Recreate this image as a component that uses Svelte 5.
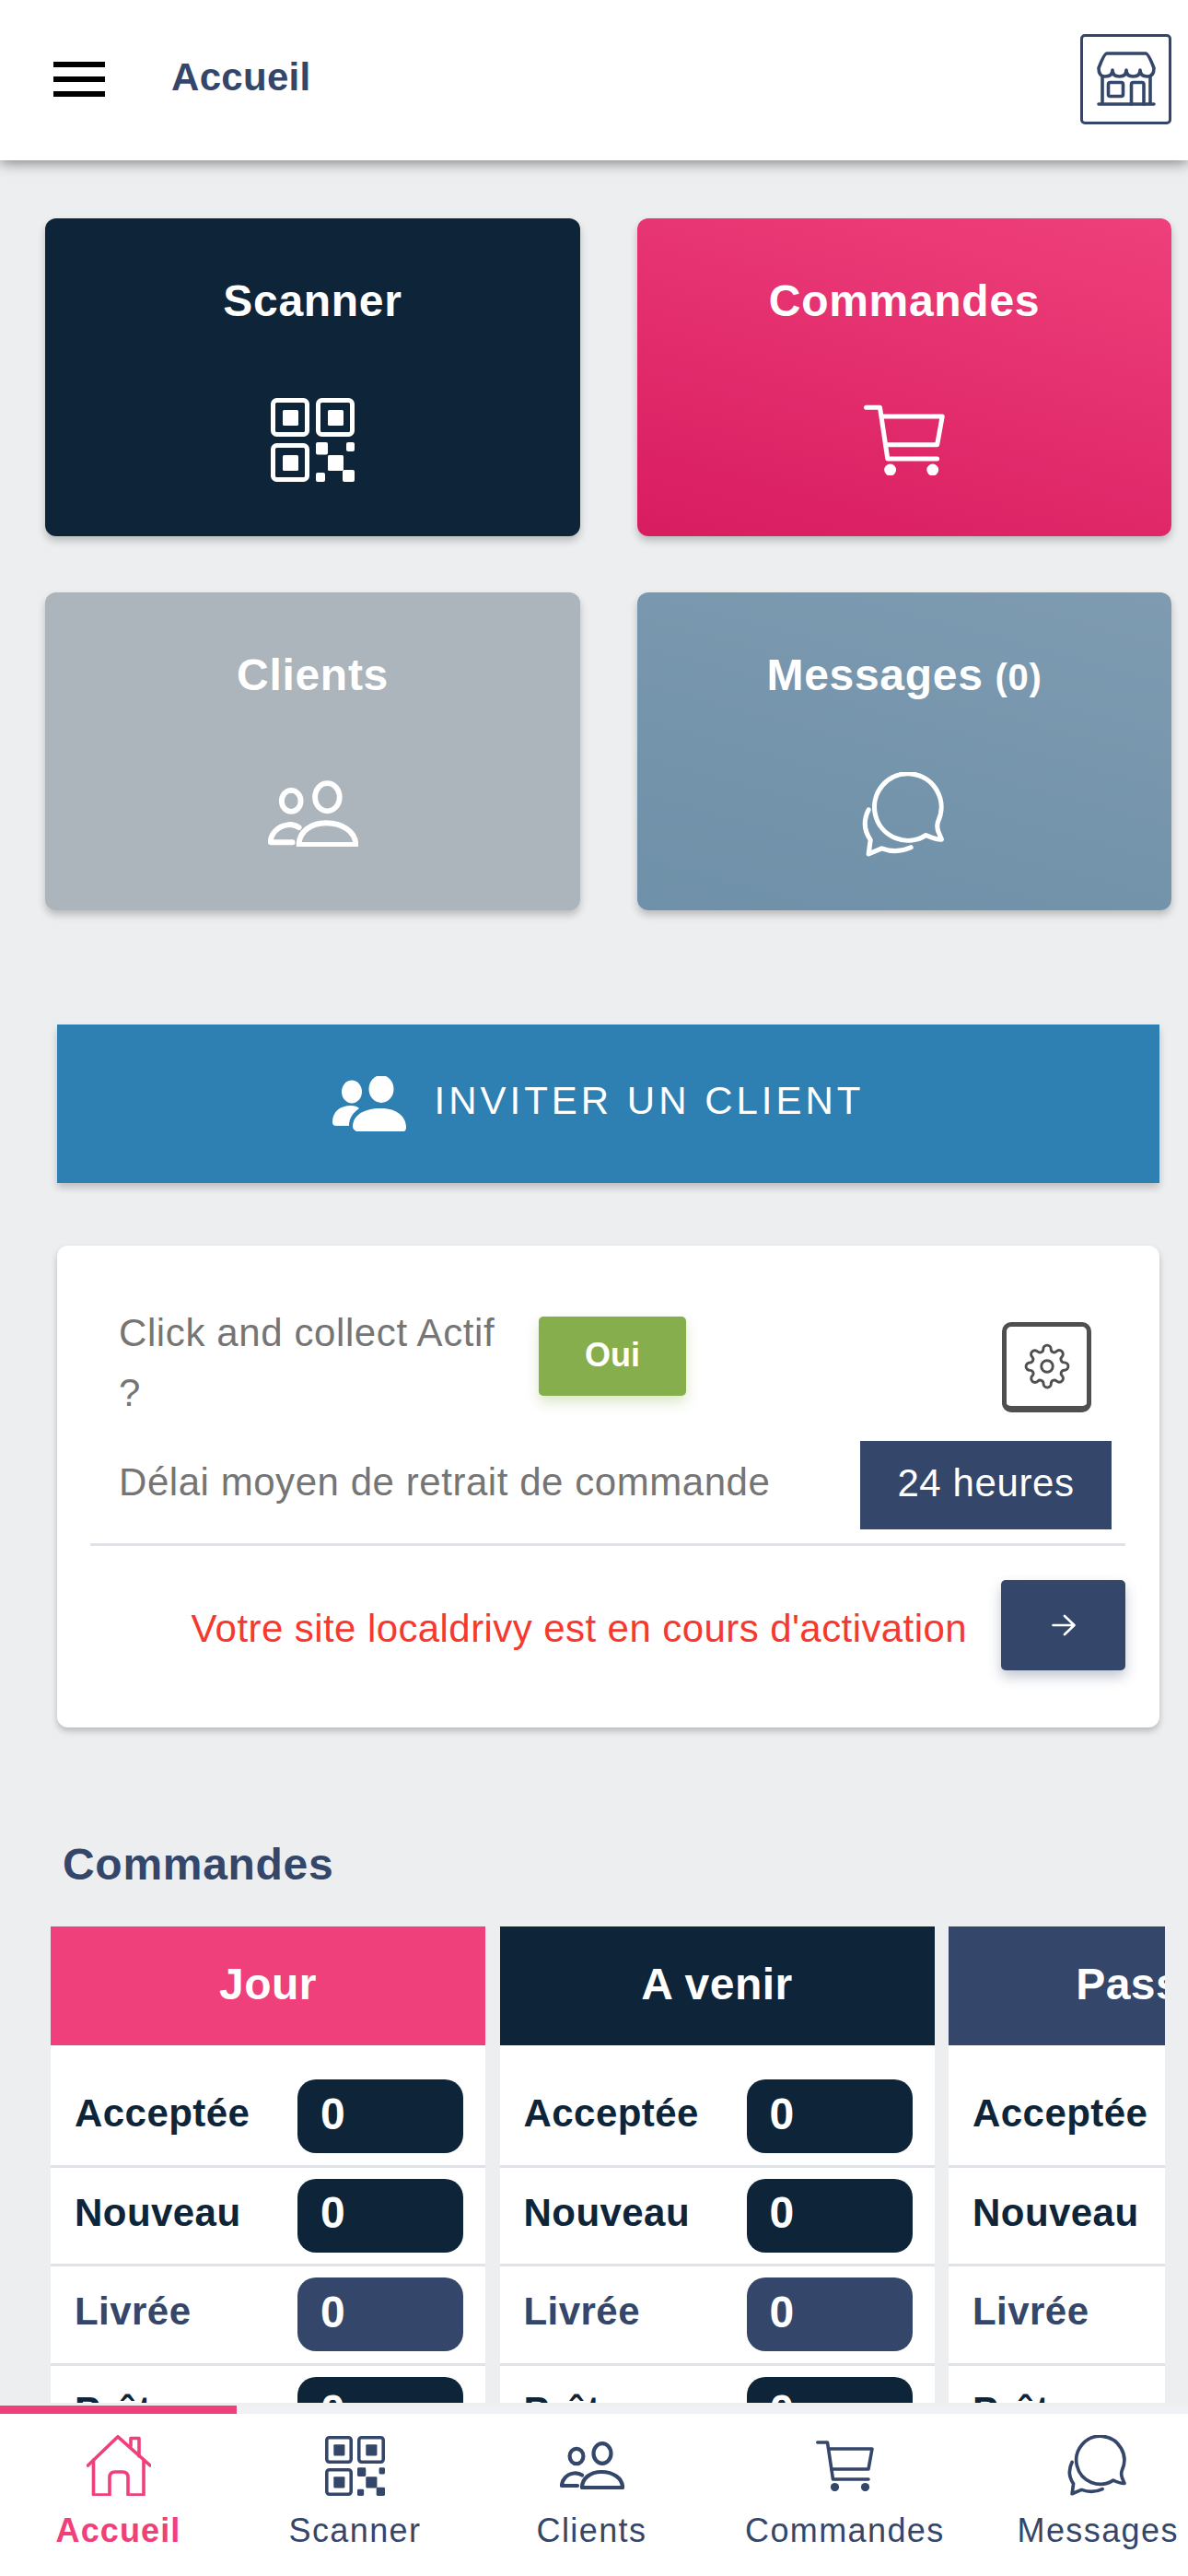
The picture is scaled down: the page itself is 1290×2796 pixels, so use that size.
<script>
  const VIEW = {
    qr: [91, 91, 5],
    cart: [63, 56, 3.6],
    users: [70, 52, 4.2],
    chat: [90, 91, 5],
    home: [70, 66, 3.6],
    store: [64, 60, 3.6],
    peopleFill: [80, 60, 0],
  };

  const CARDS = [
    { title: "Scanner", icon: "qr", w: 91, tone: "navy" },
    { title: "Commandes", icon: "cart", w: 88, tone: "pink" },
    { title: "Clients", icon: "users", w: 98, tone: "grey" },
    { title: "Messages", count: "(0)", icon: "chat", w: 92, tone: "slate" },
  ];

  const COLUMNS = [
    { title: "Jour", tone: "pinkhead" },
    { title: "A venir", tone: "navyhead" },
    { title: "Passées", tone: "bluehead" },
  ];

  const ROWS = [
    { label: "Acceptée", n: 0 },
    { label: "Nouveau", n: 0 },
    { label: "Livrée", n: 0, soft: true },
    { label: "Prête", n: 0 },
  ];

  const TABS = [
    { label: "Accueil", icon: "home", w: 70, active: true },
    { label: "Scanner", icon: "qr", w: 65 },
    { label: "Clients", icon: "users", w: 70 },
    { label: "Commandes", icon: "cart", w: 63 },
    { label: "Messages", icon: "chat", w: 66 },
  ];
</script>

{#snippet icon(name, w)}
  <svg
    width={w}
    height={(w * VIEW[name][1]) / VIEW[name][0]}
    viewBox="0 0 {VIEW[name][0]} {VIEW[name][1]}"
    fill="none"
    stroke="currentColor"
    stroke-width={VIEW[name][2]}
    stroke-linecap="round"
    stroke-linejoin="round"
  >
    {#if name === "qr"}
      <rect x="2.5" y="2.5" width="37" height="37" rx="4" />
      <rect x="51.5" y="2.5" width="37" height="37" rx="4" />
      <rect x="2.5" y="51.5" width="37" height="37" rx="4" />
      <g fill="currentColor" stroke="none">
        <rect x="13" y="13" width="17" height="17" rx="1.5" />
        <rect x="62" y="13" width="17" height="17" rx="1.5" />
        <rect x="13" y="62" width="17" height="17" rx="1.5" />
        <rect x="49" y="48" width="13" height="13.5" rx="2" />
        <rect x="82" y="48" width="9" height="10" rx="2" />
        <rect x="62" y="62" width="17" height="17" rx="1.5" />
        <rect x="49" y="81" width="10" height="10" rx="2" />
        <rect x="78" y="78" width="13" height="13" rx="2" />
      </g>
    {:else if name === "cart"}
      <path d="M1.8 3H12.5L18.5 43H57" />
      <path d="M14 10H61L57 32H17" />
      <g fill="currentColor" stroke="none">
        <ellipse cx="20.5" cy="51.5" rx="4.6" ry="4.6" />
        <ellipse cx="53.5" cy="51.5" rx="4.6" ry="4.6" />
      </g>
    {:else if name === "users"}
      <ellipse cx="18" cy="16" rx="7.4" ry="8.2" />
      <ellipse cx="46" cy="13" rx="9.5" ry="10.8" />
      <path d="M24 36.5C21 34.5 18 34 15 34.500C7 35.500 2 42 2 48H19" />
      <path d="M24 50C24 40 33 33 45 33C58 33 68 40 68 50Z" />
    {:else if name === "chat"}
      <path d="M68 67A35.5 35.500 0 1 1 81 52Q79 57 81 63L84.500 71.500Q79 72 68 67Z" />
      <path d="M7 40C1 52 2 62 9 72L7 87L21 81Q37 87 52 80" />
    {:else if name === "home"}
      <path d="M1.500 33L34 1.800L69 33" />
      <path d="M7.500 27V65H25V46Q25 40 31 40H39Q45 40 45 46V65H62V27" />
      <path d="M48 12V3.500H57V23" />
    {:else if name === "store"}
      <path d="M11 2H53Q56 2 62 18Q62 27 55 27Q47 27 47 20Q47 27 39.500 27Q32 27 32 20Q32 27 24.500 27Q17 27 17 20Q17 27 9 27Q2 27 2 18Q8 2 11 2Z" />
      <path d="M6 27V57M58 27V57M2 57H62" />
      <rect x="12.500" y="33.500" width="16" height="15" rx="2" />
      <path d="M37.500 57V35.500Q37.500 33.500 39.500 33.500H49Q51 33.500 51 35.500V57" />
    {:else if name === "peopleFill"}
      <g fill="currentColor" stroke="none">
        <ellipse cx="21" cy="17" rx="11" ry="12.500" />
        <ellipse cx="53" cy="14" rx="13.500" ry="15" />
        <path d="M0 50C0 38 9 32 20 32C24 32 27 33 29 35C22 40 18 46 18 54H4C2 54 0 53 0 50Z" />
        <path d="M26 60C24 59 22 57 22 55C22 43 33 35 53 35C70 35 80 44 80 56C80 58 79 60 77 60Z" />
      </g>
    {/if}
  </svg>
{/snippet}

<div class="app">
  <header class="topbar">
    <button class="burger" aria-label="Menu"><span></span><span></span><span></span></button>
    <h1>Accueil</h1>
    <button class="shop" aria-label="Boutique">{@render icon("store", 64)}</button>
  </header>

  <main class="content">
    <section class="cards">
      {#each CARDS as c}
        <div class="card {c.tone}">
          <div class="card-title">{c.title}{#if c.count}<small>{c.count}</small>{/if}</div>
          <div class="card-icon">{@render icon(c.icon, c.w)}</div>
        </div>
      {/each}
    </section>

    <button class="invite">
      {@render icon("peopleFill", 80)}
      <span>INVITER UN CLIENT</span>
    </button>

    <section class="panel">
      <div class="p-row first">
        <div class="p-label">Click and collect Actif ?</div>
        <button class="oui">Oui</button>
        <button class="gear" aria-label="Réglages">
          <svg width="50" height="50" viewBox="0 0 24 24" fill="none" stroke="currentColor" stroke-width="1.4" stroke-linecap="round" stroke-linejoin="round">
            <circle cx="12" cy="12" r="3" />
            <path d="M19.4 15a1.65 1.65 0 0 0 .33 1.82l.06.06a2 2 0 0 1 0 2.83 2 2 0 0 1-2.83 0l-.06-.06a1.65 1.65 0 0 0-1.82-.33 1.65 1.65 0 0 0-1 1.51V21a2 2 0 0 1-2 2 2 2 0 0 1-2-2v-.09A1.65 1.65 0 0 0 9 19.4a1.65 1.65 0 0 0-1.82.33l-.06.06a2 2 0 0 1-2.83 0 2 2 0 0 1 0-2.83l.06-.06a1.65 1.65 0 0 0 .33-1.82 1.65 1.65 0 0 0-1.51-1H3a2 2 0 0 1-2-2 2 2 0 0 1 2-2h.09A1.65 1.65 0 0 0 4.6 9a1.65 1.65 0 0 0-.33-1.82l-.06-.06a2 2 0 0 1 0-2.83 2 2 0 0 1 2.83 0l.06.06a1.65 1.65 0 0 0 1.82.33H9a1.65 1.65 0 0 0 1-1.51V3a2 2 0 0 1 2-2 2 2 0 0 1 2 2v.09a1.65 1.65 0 0 0 1 1.51 1.65 1.65 0 0 0 1.82-.33l.06-.06a2 2 0 0 1 2.83 0 2 2 0 0 1 0 2.83l-.06.06a1.65 1.65 0 0 0-.33 1.82V9a1.65 1.65 0 0 0 1.51 1H21a2 2 0 0 1 2 2 2 2 0 0 1-2 2h-.09a1.65 1.65 0 0 0-1.51 1z" />
          </svg>
        </button>
      </div>
      <div class="p-row second">
        <div class="p-text">Délai moyen de retrait de commande</div>
        <button class="delay">24 heures</button>
      </div>
      <div class="divider"></div>
      <div class="p-row third">
        <div class="warn">Votre site localdrivy est en cours d'activation</div>
        <button class="go" aria-label="Ouvrir">
          <svg width="26" height="24" viewBox="0 0 26 24" fill="none" stroke="currentColor" stroke-width="2.600" stroke-linecap="round" stroke-linejoin="round">
            <path d="M1.500 12H24M14 2L24.500 12L14 22" />
          </svg>
        </button>
      </div>
    </section>

    <h2>Commandes</h2>

    <section class="strip">
      {#each COLUMNS as col}
        <div class="col">
          <div class="col-head {col.tone}">{col.title}</div>
          {#each ROWS as r}
            <div class="row" class:soft={r.soft}>
              <span class="row-label">{r.label}</span>
              <span class="pill">{r.n}</span>
            </div>
          {/each}
        </div>
      {/each}
    </section>
  </main>

  <nav class="tabbar">
    {#each TABS as t}
      <div class="tab" class:active={t.active}>
        <div class="tab-bar"></div>
        <div class="tab-icon">{@render icon(t.icon, t.w)}</div>
        <div class="tab-label">{t.label}</div>
      </div>
    {/each}
  </nav>
</div>

<style>
  :global(body) {
    margin: 0;
    background: #edeef0;
  }
  .app {
    width: 1290px;
    height: 2796px;
    display: flex;
    flex-direction: column;
    overflow: hidden;
    background: #edeef0;
    font-family: "Liberation Sans", Arial, sans-serif;
    color: #34466a;
  }
  button {
    font-family: inherit;
    border: none;
    padding: 0;
    background: none;
    color: inherit;
  }
  svg {
    display: block;
  }

  /* header */
  .topbar {
    flex: none;
    height: 174px;
    box-sizing: border-box;
    display: flex;
    align-items: center;
    padding: 0 18px 0 58px;
    background: #fff;
    box-shadow: 0 3px 14px rgba(0, 0, 0, 0.45);
    position: relative;
    z-index: 2;
  }
  .burger {
    width: 56px;
    display: flex;
    flex-direction: column;
    gap: 10px;
    margin-bottom: 2px;
  }
  .burger span {
    height: 6px;
    background: #000;
  }
  h1 {
    margin: 0 0 7px 72px;
    font-size: 42px;
    font-weight: 700;
    line-height: 50px;
    letter-spacing: 0.3px;
  }
  .shop {
    margin: 0 0 3px auto;
    width: 99px;
    height: 98px;
    box-sizing: border-box;
    border: 3px solid #34466a;
    border-radius: 5px;
    display: flex;
    align-items: center;
    justify-content: center;
  }

  /* quick cards */
  .content {
    flex: 1;
    min-height: 0;
    overflow: hidden;
  }
  .cards {
    display: grid;
    grid-template-columns: 581px 580px;
    grid-auto-rows: 345px;
    column-gap: 62px;
    row-gap: 61px;
    padding: 63px 18px 0 49px;
  }
  .card {
    border-radius: 12px;
    box-shadow: 0 5px 8px rgba(0, 0, 0, 0.22);
    color: #fff;
    text-align: center;
    padding-top: 62px;
    box-sizing: border-box;
  }
  .card-title {
    font-size: 48px;
    font-weight: 700;
    line-height: 56px;
    letter-spacing: 0.7px;
  }
  .card-title small {
    font-size: 40px;
    margin-left: 13px;
  }
  .card-icon {
    height: 96px;
    margin-top: 74px;
    display: flex;
    align-items: center;
    justify-content: center;
  }
  .navy {
    background: #0e2439;
  }
  .pink {
    background: linear-gradient(195deg, #ef407b, #d81c60);
  }
  .grey {
    background: #acb4bc;
  }
  .slate {
    background: linear-gradient(195deg, #7e9bb1, #6e90a8);
  }

  /* invite */
  .invite {
    display: flex;
    align-items: center;
    justify-content: center;
    gap: 30px;
    width: 1197px;
    height: 172px;
    margin: 124px 0 0 62px;
    padding-right: 21px;
    box-sizing: border-box;
    background: #2e7fb2;
    color: #fff;
    font-size: 42px;
    letter-spacing: 4px;
    box-shadow: 0 5px 8px rgba(0, 0, 0, 0.2);
  }
  .invite span {
    margin-bottom: 6px;
  }

  /* click and collect */
  .panel {
    width: 1197px;
    box-sizing: border-box;
    margin: 68px 0 0 62px;
    padding: 62px 0;
    background: #fff;
    border-radius: 12px;
    box-shadow: 0 4px 7px rgba(0, 0, 0, 0.22);
  }
  .p-row {
    display: flex;
    align-items: flex-start;
  }
  .first {
    padding-left: 67px;
    height: 130px;
  }
  .p-label {
    width: 426px;
    font-size: 42px;
    line-height: 65px;
    letter-spacing: 0.6px;
    color: #757575;
  }
  .oui {
    margin: 15px 0 0 30px;
    width: 160px;
    height: 86px;
    padding-bottom: 3px;
    border-radius: 5px;
    background: #87ae4c;
    color: #fff;
    font-size: 36px;
    font-weight: 700;
    box-shadow: 0 7px 14px rgba(135, 174, 76, 0.3);
  }
  .gear {
    margin: 21px 74px 0 auto;
    width: 97px;
    height: 98px;
    box-sizing: border-box;
    border: 5px solid #4f4f4f;
    border-bottom-width: 7px;
    border-radius: 10px;
    color: #4f4f4f;
    display: flex;
    align-items: center;
    justify-content: center;
  }
  .second {
    margin-top: 20px;
    padding: 0 52px 0 67px;
    align-items: center;
    justify-content: space-between;
  }
  .p-text {
    font-size: 42px;
    line-height: 50px;
    letter-spacing: 0.55px;
    color: #757575;
    margin-bottom: 7px;
  }
  .delay {
    width: 273px;
    height: 96px;
    padding-bottom: 5px;
    background: #34466a;
    color: #fff;
    font-size: 42px;
    letter-spacing: 0.6px;
  }
  .divider {
    height: 3px;
    margin: 15px 37px 0 36px;
    background: #dfe3e9;
  }
  .third {
    margin-top: 37px;
    padding-right: 37px;
    justify-content: flex-end;
    align-items: center;
    gap: 37px;
  }
  .warn {
    font-size: 42px;
    line-height: 50px;
    letter-spacing: 0.42px;
    color: #f6392f;
    margin-top: 8px;
  }
  .go {
    width: 135px;
    height: 98px;
    background: #34466a;
    border-radius: 5px;
    color: #fff;
    display: flex;
    align-items: center;
    justify-content: center;
    box-shadow: 0 7px 14px rgba(52, 70, 106, 0.3);
  }

  /* orders table */
  h2 {
    margin: 121px 0 39px 68px;
    font-size: 48px;
    font-weight: 700;
    line-height: 56px;
    letter-spacing: 0.7px;
  }
  .strip {
    display: flex;
    gap: 15.500px;
    margin: 0 25px 0 55px;
    overflow: hidden;
  }
  .col {
    flex: 0 0 472px;
    background: #fff;
  }
  .col-head {
    height: 129px;
    line-height: 125px;
    text-align: center;
    font-size: 48px;
    font-weight: 700;
    letter-spacing: 0.5px;
    color: #fff;
  }
  .pinkhead {
    background: #ef407b;
  }
  .navyhead {
    background: #0e2439;
  }
  .bluehead {
    background: #34466a;
  }
  .row {
    display: flex;
    align-items: center;
    justify-content: space-between;
    padding: 12px 24px 12.500px 26px;
    border-bottom: 3px solid #dfe3e9;
    color: #0e2439;
  }
  .row:nth-child(2) {
    padding-top: 37px;
  }
  .row-label {
    font-size: 42px;
    font-weight: 700;
    letter-spacing: 0.45px;
    padding-bottom: 6px;
  }
  .pill {
    width: 180px;
    height: 80px;
    box-sizing: border-box;
    padding: 0 0 6px 25px;
    border-radius: 20px;
    background: #0e2439;
    color: #fff;
    font-size: 48px;
    font-weight: 700;
    display: flex;
    align-items: center;
  }
  .soft {
    color: #34466a;
  }
  .soft .pill {
    background: #34466a;
  }

  /* bottom tabs */
  .tabbar {
    flex: none;
    height: 188px;
    box-sizing: border-box;
    display: flex;
    background: #fff;
    border-top: 3px solid #eeeff1;
    overflow: hidden;
  }
  .tab {
    flex: none;
    min-width: 257px;
    box-sizing: border-box;
    padding: 32px 38px 0;
    position: relative;
    display: flex;
    flex-direction: column;
    align-items: center;
  }
  .tab-bar {
    position: absolute;
    left: 0;
    right: 0;
    top: 0;
    height: 9px;
    background: #f0f1f4;
  }
  .tab-icon {
    height: 66px;
    display: flex;
    align-items: center;
  }
  .tab-label {
    margin-top: 17px;
    font-size: 36px;
    line-height: 42px;
    letter-spacing: 1.400px;
  }
  .active {
    color: #ef407b;
  }
  .active .tab-bar {
    background: #ef407b;
  }
  .active .tab-label {
    font-weight: 700;
    letter-spacing: 1.100px;
  }
</style>
